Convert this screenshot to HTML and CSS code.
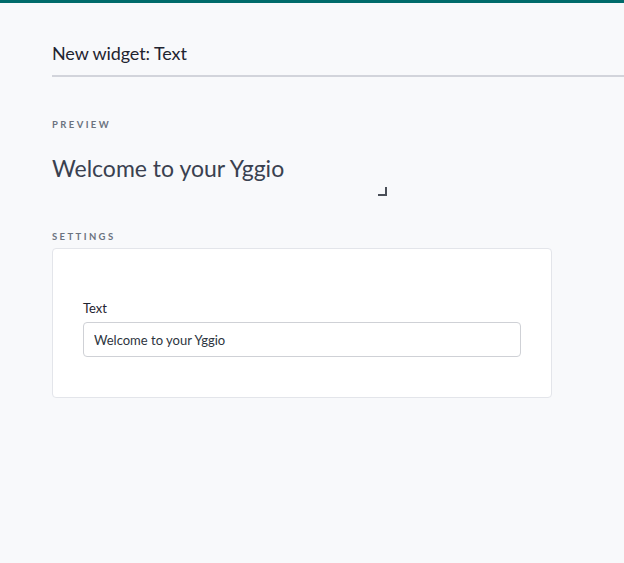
FILE: index.html
```html
<!DOCTYPE html>
<html>
<head>
<meta charset="utf-8">
<link rel="stylesheet" href="styles.css">
</head>
<body>
<div class="topbar"></div>
<main class="page">
  <header class="header">
    <h1 class="title">New widget: Text</h1>
  </header>
  <section class="section">
    <div class="label">PREVIEW</div>
    <div class="preview">
      <div class="preview-text">Welcome to your Yggio</div>
      <span class="resize"></span>
    </div>
  </section>
  <section class="section settings">
    <div class="label">SETTINGS</div>
    <div class="card">
      <label class="field-label" for="t">Text</label>
      <input id="t" class="input" type="text" value="Welcome to your Yggio">
    </div>
  </section>
</main>
</body>
</html>
```
FILE: styles.css
```css
* { box-sizing: border-box; }
html, body { margin: 0; padding: 0; }
body {
  background: #f8f9fb;
  font-family: Lato, "Noto Sans", sans-serif;
  color: #2d3748;
  height: 563px;
}
.topbar { height: 3px; background: #006b6b; }
.page { padding-left: 52px; }
.header {
  padding-top: 38px;
  border-bottom: 2px solid #d2d4db;
  height: 74px;
}
.title {
  margin: 0;
  font-size: 18px;
  font-weight: 400;
  line-height: 24px;
  color: #1f2430;
  letter-spacing: -0.1px;
}
.section { padding-top: 42px; }
.label {
  font-size: 9.5px;
  font-weight: 700;
  letter-spacing: 2.4px;
  color: #6b7380;
  line-height: 12px;
}
.preview {
  position: relative;
  width: 335px;
  height: 66px;
  padding-top: 22px;
}
.preview-text {
  font-size: 23px;
  line-height: 30px;
  color: #3a4150;
}
.resize {
  position: absolute;
  right: 0;
  bottom: 1px;
  width: 9px;
  height: 9px;
  border-right: 2px solid #4a4f58;
  border-bottom: 2px solid #4a4f58;
}
.settings { padding-top: 34px; }
.card {
  margin-top: 5px;
  width: 500px;
  height: 150px;
  background: #fff;
  border: 1px solid #e3e5ea;
  border-radius: 4px;
  padding: 51px 30px 0 30px;
  display: flex;
  flex-direction: column;
}
.field-label {
  font-size: 13px;
  line-height: 16px;
  color: #1f2430;
  margin-bottom: 6px;
}
.input {
  width: 438px;
  height: 35px;
  border: 1px solid #cfd1d6;
  border-radius: 4px;
  padding: 0 10px;
  font-family: Lato, "Noto Sans", sans-serif;
  font-size: 13px;
  color: #2d3440;
  background: #fff;
  outline: none;
}
```
